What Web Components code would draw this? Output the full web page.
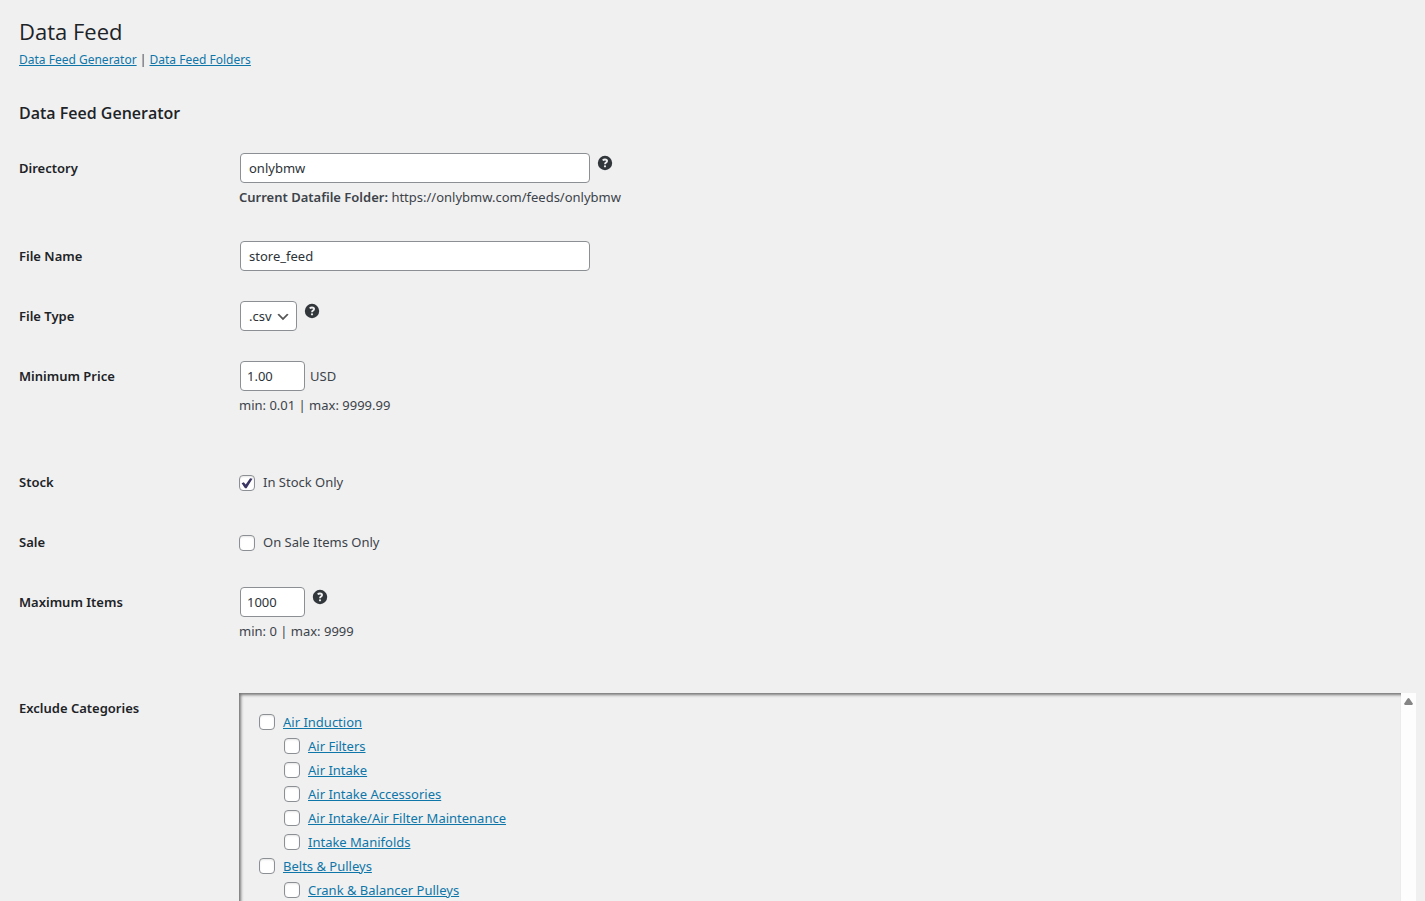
<!DOCTYPE html>
<html lang="en">
<head>
<meta charset="utf-8">
<title>Data Feed</title>
<style>
  body {
    margin: 0;
    background: #f0f0f0;
    color: #3c434a;
    font: 13px/20px "Noto Sans", "Open Sans", sans-serif;
  }
</style>
</head>
<body>
<feed-page></feed-page>

<script>
const CHECKBOX = `
  input[type="checkbox"] {
    appearance: none;
    flex: none;
    box-sizing: border-box;
    width: 16px;
    height: 16px;
    margin: 0;
    border: 1px solid #8c8f94;
    border-radius: 4px;
    background: #fff center / 16px 16px no-repeat;
    box-shadow: inset 0 1px 2px rgba(0, 0, 0, .1);
  }
`;

const LINK = `a { color: #0e76a8; text-decoration: underline; text-underline-offset: 1px; }`;

// ── Form row: label on the left, control and description on the right ───────

class FormRow extends HTMLElement {
  constructor() {
    super();
    this.attachShadow({ mode: "open" });
    this.shadowRoot.innerHTML = `
      <style>
        :host { display: grid; grid-template-columns: 220px minmax(0, 1fr); }
        .label { padding: 20px 10px 20px 0; color: #1d2327; font-weight: 600; }
        .field { padding: 15px 0; min-width: 0; }
        .control { display: flex; align-items: flex-start; gap: 5px; padding-left: 1px; }
        :host([check]) .control { min-height: 30px; align-items: center; padding-left: 0; }
        ::slotted([slot="note"]) { display: block; margin: 4px 0; }
        :host([spaced]) ::slotted([slot="note"]) { margin-bottom: 22px; }
      </style>
      <div class="label"><slot name="label"></slot></div>
      <div class="field">
        <div class="control"><slot></slot></div>
        <slot name="note"></slot>
      </div>
    `;
  }
}

// ── Help icon ───────────────────────────────────────────────────────────────

class HelpTip extends HTMLElement {
  constructor() {
    super();
    this.attachShadow({ mode: "open" });
    this.shadowRoot.innerHTML = `
      <style>
        :host { display: block; }
        button { display: block; padding: 0; border: 0; background: none; color: #32373c; cursor: help; }
        svg { display: block; width: 20px; height: 20px; }
      </style>
      <button type="button" aria-label="Help">
        <svg viewBox="0 0 20 20" aria-hidden="true">
          <circle cx="10" cy="10" r="7.2" fill="currentColor"/>
          <path d="M7.7 7.4c.6-.6 1.4-.9 2.3-.9 1.300 0 2.100.6 2.100 1.600 0 1.500-2.100 1.500-2.100 3.100" fill="none" stroke="#f0f0f0" stroke-width="1.8"/>
          <circle cx="10" cy="13.3" r="1.1" fill="#f0f0f0"/>
        </svg>
      </button>
    `;
  }
}

// ── Category tree ───────────────────────────────────────────────────────────

class CategoryItem extends HTMLElement {
  constructor() {
    super();
    this.attachShadow({ mode: "open" });
    this.shadowRoot.innerHTML = `
      <style>
        ${CHECKBOX}
        ${LINK}
        :host { display: block; }
        .row { display: flex; align-items: center; gap: 8px; height: 24px; white-space: nowrap; }
        .children { padding-left: 25px; }
      </style>
      <div class="row">
        <input type="checkbox" id="check">
        <label for="check"><a href="#"></a></label>
      </div>
      <div class="children"><slot></slot></div>
    `;
  }

  connectedCallback() {
    this.shadowRoot.querySelector("a").textContent = this.getAttribute("name");
  }
}

class CategoryPanel extends HTMLElement {
  constructor() {
    super();
    this.attachShadow({ mode: "open" });
    this.shadowRoot.innerHTML = `
      <style>
        :host { display: grid; grid-template-columns: minmax(0, 1fr) 15px; }
        .list {
          padding: 17px 20px;
          box-shadow: inset 2px 2px 3px #777;
        }
        .rail { background: #fdfdfd; }
        .rail svg { display: block; width: 15px; height: 16px; fill: #858585; }
      </style>
      <div class="list"><slot></slot></div>
      <div class="rail">
        <svg viewBox="0 0 15 16" aria-hidden="true"><path d="M6.6 5.5q.9-1 1.8 0l3.2 4.7q.7 1.6-.8 1.8H4.2q-1.5-.2-.8-1.8z"/></svg>
      </div>
    `;
  }
}

// ── Page ────────────────────────────────────────────────────────────────────

class FeedPage extends HTMLElement {
  constructor() {
    super();
    this.attachShadow({ mode: "open" });
    this.shadowRoot.innerHTML = `
      <style>
        ${CHECKBOX}
        ${LINK}
        :host {
          display: flex;
          flex-direction: column;
          box-sizing: border-box;
          height: 100vh;
          overflow: hidden;
          padding: 16px 9px 0 19px;
        }
        h1, h2 { margin: 0; color: #1d2327; font-family: "Open Sans", "Noto Sans", sans-serif; }
        h1 { font-size: 22px; line-height: 30px; font-weight: 400; }
        h2 { margin: 29px 0 15px; font-size: 16px; line-height: 20px; font-weight: 600; }
        nav { font-size: 12px; line-height: 28px; }
        strong { font-weight: 600; }
        form { display: flex; flex: 1; flex-direction: column; min-height: 0; }
        form-row { flex: none; }
        .categories { flex: 1; min-height: 0; }
        category-panel { flex: 1; }
        .text, select {
          box-sizing: border-box;
          height: 30px;
          margin: 0;
          padding: 0 8px;
          border: 1px solid #8c8f94;
          border-radius: 4px;
          background: #fff;
          color: #2c3338;
          font: inherit;
        }
        .text { width: 350px; }
        .small { width: 65px; padding: 0 6px; }
        select {
          appearance: none;
          width: 57px;
          background: #fff url('data:image/svg+xml,%3Csvg xmlns="http://www.w3.org/2000/svg" viewBox="0 0 20 20"%3E%3Cpath d="M5 6l5 5 5-5 2 1-7 7-7-7 2-1z" fill="%23555"/%3E%3C/svg%3E') no-repeat right 5px top 55% / 16px 16px;
        }
        .unit { line-height: 30px; }
        .check { padding-left: 3px; }
        .box { padding-top: 2px; }
        .box input { display: block; }
        input:checked {
          background-image: url('data:image/svg+xml,%3Csvg xmlns="http://www.w3.org/2000/svg" viewBox="0 0 16 16"%3E%3Cpath d="M2.6 8.2l2.2-.9 1.900 2.300 4.400-6.400 2.400.5-5.900 9.500H6z" fill="%233b3564"/%3E%3C/svg%3E');
        }
      </style>

      <h1>Data Feed</h1>
      <nav><a href="#">Data Feed Generator</a> | <a href="#">Data Feed Folders</a></nav>
      <h2>Data Feed Generator</h2>

      <form>
        <form-row>
          <label slot="label" for="directory">Directory</label>
          <input class="text" id="directory" type="text" value="onlybmw">
          <help-tip></help-tip>
          <span slot="note"><strong>Current Datafile Folder:</strong> https://onlybmw.com/feeds/onlybmw</span>
        </form-row>

        <form-row>
          <label slot="label" for="file-name">File Name</label>
          <input class="text" id="file-name" type="text" value="store_feed">
        </form-row>

        <form-row>
          <label slot="label" for="file-type">File Type</label>
          <select id="file-type"><option>.csv</option></select>
          <help-tip></help-tip>
        </form-row>

        <form-row spaced>
          <label slot="label" for="min-price">Minimum Price</label>
          <input class="text small" id="min-price" type="text" value="1.00">
          <span class="unit">USD</span>
          <span slot="note">min: 0.01 | max: 9999.99</span>
        </form-row>

        <form-row check>
          <span slot="label">Stock</span>
          <span class="box"><input type="checkbox" id="in-stock" checked></span>
          <label class="check" for="in-stock">In Stock Only</label>
        </form-row>

        <form-row check>
          <span slot="label">Sale</span>
          <span class="box"><input type="checkbox" id="on-sale"></span>
          <label class="check" for="on-sale">On Sale Items Only</label>
        </form-row>

        <form-row spaced>
          <label slot="label" for="max-items">Maximum Items</label>
          <input class="text small" id="max-items" type="text" value="1000">
          <help-tip></help-tip>
          <span slot="note">min: 0 | max: 9999</span>
        </form-row>

        <form-row class="categories" check>
          <span slot="label">Exclude Categories</span>
          <category-panel>
            <category-item name="Air Induction">
              <category-item name="Air Filters"></category-item>
              <category-item name="Air Intake"></category-item>
              <category-item name="Air Intake Accessories"></category-item>
              <category-item name="Air Intake/Air Filter Maintenance"></category-item>
              <category-item name="Intake Manifolds"></category-item>
            </category-item>
            <category-item name="Belts &amp; Pulleys">
              <category-item name="Crank &amp; Balancer Pulleys"></category-item>
            </category-item>
          </category-panel>
        </form-row>
      </form>
    `;
  }
}

customElements.define("form-row", FormRow);
customElements.define("help-tip", HelpTip);
customElements.define("category-item", CategoryItem);
customElements.define("category-panel", CategoryPanel);
customElements.define("feed-page", FeedPage);
</script>
</body>
</html>
